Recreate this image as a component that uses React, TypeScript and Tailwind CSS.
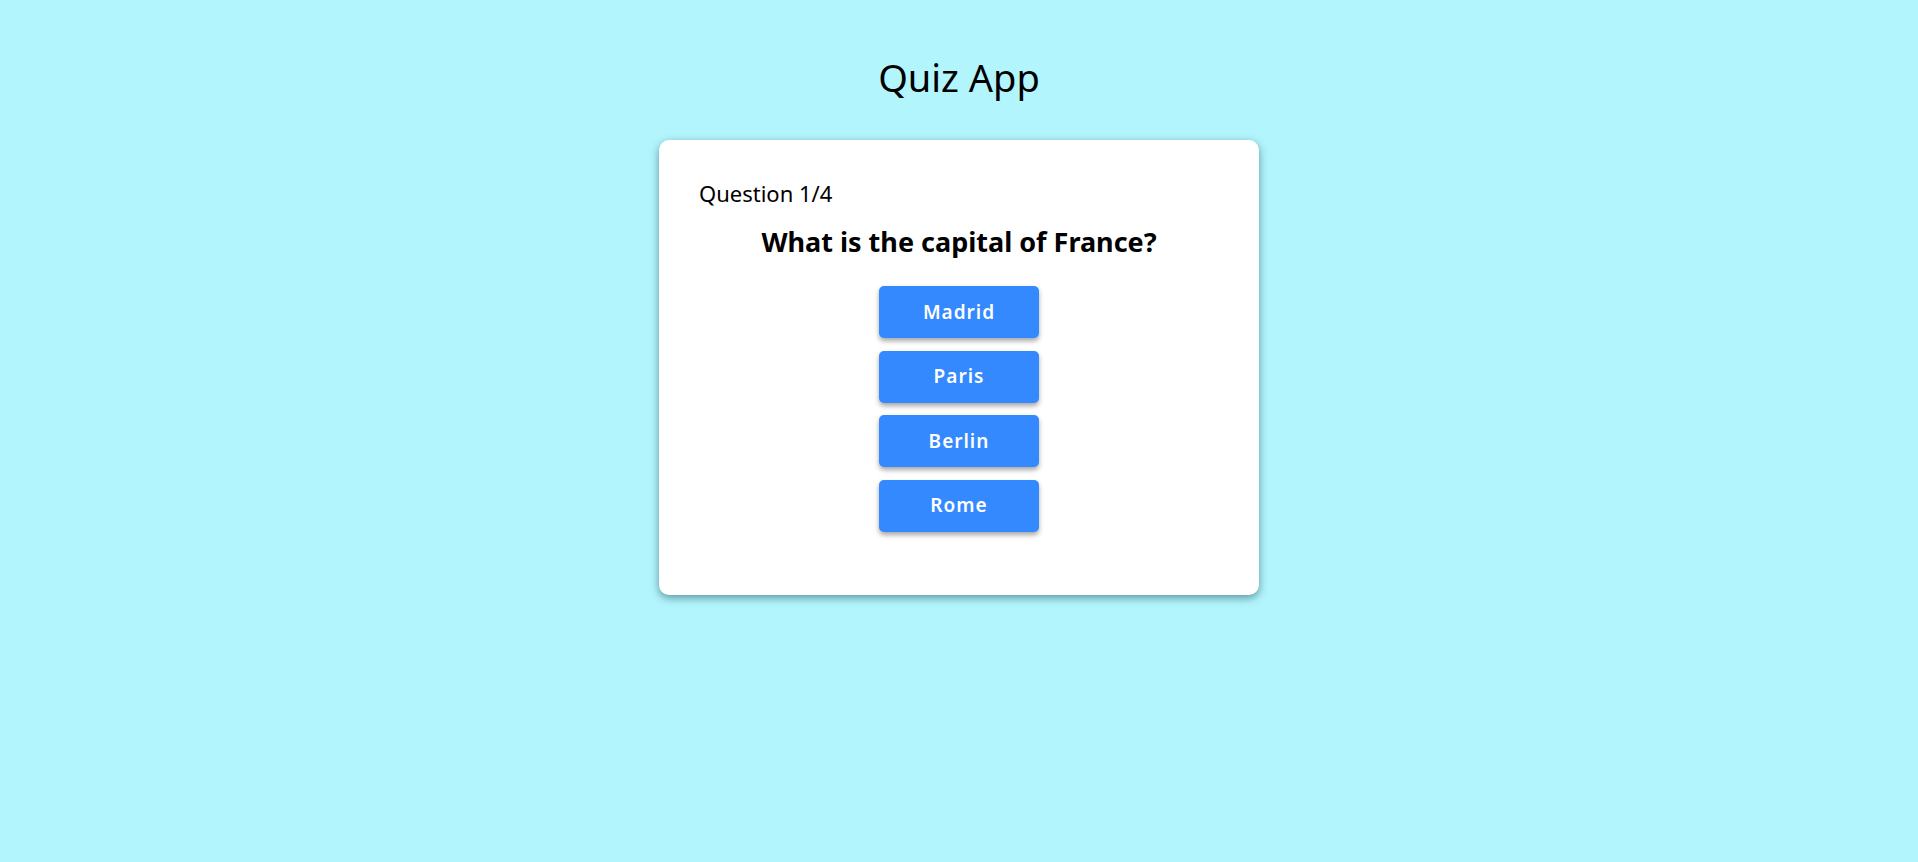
const options = ["Madrid", "Paris", "Berlin", "Rome"];

export default function App() {
    return (
        <div className="min-h-screen w-full bg-[#b3f5fd] flex flex-col items-center font-['Noto_Sans',sans-serif] text-black">
            <h1 className="mt-[54px] text-[38px] leading-[46px] font-normal">Quiz App</h1>

            <div className="mt-[40px] w-[600px] bg-white rounded-[10px] shadow-[0_3px_8px_rgba(0,60,70,0.5)] px-10 pt-[38px] pb-[63px]">
                <div className="text-[22px] leading-[30px]">Question 1/4</div>
                <h2 className="mt-[17px] text-center text-[27px] leading-[34px] font-bold">What is the capital of France?</h2>

                <div className="mt-[27px] flex flex-col items-center gap-[12.5px]">
                    {options.map((option) => (
                        <button key={option} className="w-[160px] h-[52px] rounded-[5px] bg-[#3489ff] text-white text-[19px] font-semibold tracking-[1px] shadow-[0_3px_5px_rgba(0,0,0,0.35)]">
                            {option}
                        </button>
                    ))}
                </div>
            </div>
        </div>
    );
}
